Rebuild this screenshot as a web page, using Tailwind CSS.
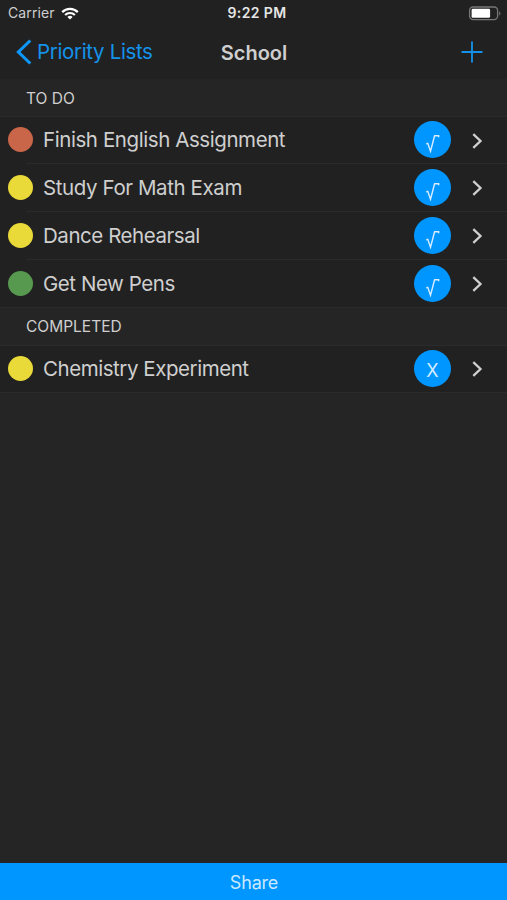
<!DOCTYPE html>
<html lang="en">
<head>
<meta charset="utf-8">
<title>School</title>
<script src="https://cdn.jsdelivr.net/npm/@tailwindcss/browser@4"></script>
</head>
<body class="bg-[#252525]">
<svg class="hidden">
  <symbol id="root" viewBox="0 0 37 37"><path d="M12.2 22.8l1.6-.5 2.7 8L20.6 14.7h4.1v1.6" fill="none" stroke="#d5edff" stroke-width="1.4"/></symbol>
  <symbol id="chev" viewBox="0 0 12 18"><path d="M2.3 2.1l7.2 6.9-7.2 6.9" fill="none" stroke="#d0d0d0" stroke-width="2.3"/></symbol>
</svg>
<div class="flex h-[900px] w-[507px] flex-col overflow-hidden font-['Inter','Liberation_Sans',sans-serif] text-[#cfcfcf]">
  <header class="h-[79px] bg-[#212121]">
    <div class="grid h-[26px] grid-cols-[1fr_auto_1fr] items-center pl-2 pr-[6px]">
      <div class="flex items-center gap-[6px]">
        <span class="text-[14px] leading-[26px] tracking-[0.1px]">Carrier</span>
        <svg class="h-[13px] w-[18px]" viewBox="0 0 18 13" fill="none" stroke="#fff" stroke-width="2.2"><path d="M1.2 5.1a11 11 0 0 1 15.6 0M4.1 8a7 7 0 0 1 9.8 0"/><path d="M9 12.6L6.4 10a3.7 3.7 0 0 1 5.2 0z" fill="#fff" stroke="none"/></svg>
      </div>
      <span class="pl-[5px] text-center text-[14px] font-semibold leading-[26px] tracking-[0.4px] text-[#e6e6e6]">9:22 PM</span>
      <svg class="h-[15px] w-[33px] justify-self-end" viewBox="0 0 33 15"><rect x="1.6" y="1" width="28" height="12.6" rx="3.5" fill="none" stroke="#777" stroke-width="1.3"/><rect x="3.6" y="2.8" width="18.5" height="9" rx="1.3" fill="#fff"/><path d="M31.2 5.2a2.6 2.6 0 0 1 0 4.4z" fill="#777"/></svg>
    </div>
    <div class="grid h-[52px] grid-cols-[1fr_auto_1fr] items-center pl-4 pr-[24px]">
      <div class="flex items-center gap-[5px] whitespace-nowrap text-[#1492ea]">
        <svg class="h-[26px] w-4" viewBox="0 0 16 26"><path d="M14.3 1.5L2.4 13l11.9 11.5" fill="none" stroke="#0e97f8" stroke-width="3.1"/></svg>
        <span class="pt-px text-[20.5px] tracking-[-0.35px]">Priority Lists</span>
      </div>
      <h1 class="pl-[9px] pt-px text-center text-[20px] font-semibold">School</h1>
      <svg class="h-[22px] w-[22px] justify-self-end" viewBox="0 0 22 22"><path d="M11 .5v21M.5 11h21" stroke="#1492ea" stroke-width="1.8"/></svg>
    </div>
  </header>
  <main class="flex-1">
    <h2 class="h-[38px] border-b border-[#2b2b2b] bg-[#252525] pl-[26px] text-[15.5px] leading-[39px]">TO DO</h2>
    <ul class="bg-[#212121]">
      <li class="flex h-[47px] items-center pl-2"><i class="mb-[2px] size-[25px] rounded-full bg-[#c96548]"></i><span class="ml-[10px] flex-1 text-[20.5px] tracking-[-0.42px]">Finish English Assignment</span><i class="mb-[2px] flex size-[37px] rounded-full bg-[#0096ff]"><svg class="size-[37px]"><use href="#root"/></svg></i><svg class="ml-5 mr-6 h-[18px] w-3"><use href="#chev"/></svg></li>
      <li class="ml-[26px] h-px -mt-px bg-[#2b2b2b]"></li>
      <li class="flex h-[48px] items-center pl-2"><i class="mb-[2px] size-[25px] rounded-full bg-[#e9d939]"></i><span class="ml-[10px] flex-1 text-[20.5px] tracking-[-0.4px]">Study For Math Exam</span><i class="mb-[2px] flex size-[37px] rounded-full bg-[#0096ff]"><svg class="size-[37px]"><use href="#root"/></svg></i><svg class="ml-5 mr-6 h-[18px] w-3"><use href="#chev"/></svg></li>
      <li class="ml-[26px] h-px -mt-px bg-[#2b2b2b]"></li>
      <li class="flex h-[48px] items-center pl-2"><i class="mb-[2px] size-[25px] rounded-full bg-[#e9d939]"></i><span class="ml-[10px] flex-1 text-[20.5px] tracking-[-0.45px]">Dance Rehearsal</span><i class="mb-[2px] flex size-[37px] rounded-full bg-[#0096ff]"><svg class="size-[37px]"><use href="#root"/></svg></i><svg class="ml-5 mr-6 h-[18px] w-3"><use href="#chev"/></svg></li>
      <li class="ml-[26px] h-px -mt-px bg-[#2b2b2b]"></li>
      <li class="flex h-[47px] items-center pl-2"><i class="mb-px size-[25px] rounded-full bg-[#57994f]"></i><span class="ml-[10px] mt-px flex-1 text-[20.5px] tracking-[-0.45px]">Get New Pens</span><i class="mb-px flex size-[37px] rounded-full bg-[#0096ff]"><svg class="size-[37px]"><use href="#root"/></svg></i><svg class="ml-5 mr-6 h-[18px] w-3"><use href="#chev"/></svg></li>
    </ul>
    <h2 class="h-[39px] border-y border-[#2b2b2b] bg-[#252525] pl-[26px] text-[15.5px] leading-[38px]">COMPLETED</h2>
    <ul class="border-b border-[#2b2b2b] bg-[#212121]">
      <li class="flex h-[46px] items-center pl-2"><i class="mb-[2px] size-[25px] rounded-full bg-[#e9d939]"></i><span class="ml-[10px] flex-1 text-[20.5px] tracking-[-0.45px]">Chemistry Experiment</span><i class="mb-[2px] flex size-[37px] items-center justify-center rounded-full bg-[#0096ff] pt-[4px] text-[18px] not-italic text-[#d5edff]">X</i><svg class="ml-5 mr-6 h-[18px] w-3"><use href="#chev"/></svg></li>
    </ul>
  </main>
  <button class="h-[37px] bg-[#0096ff] pl-px pt-px text-[18px] tracking-[-0.2px] text-[#c9e9ff]">Share</button>
</div>
</body>
</html>
